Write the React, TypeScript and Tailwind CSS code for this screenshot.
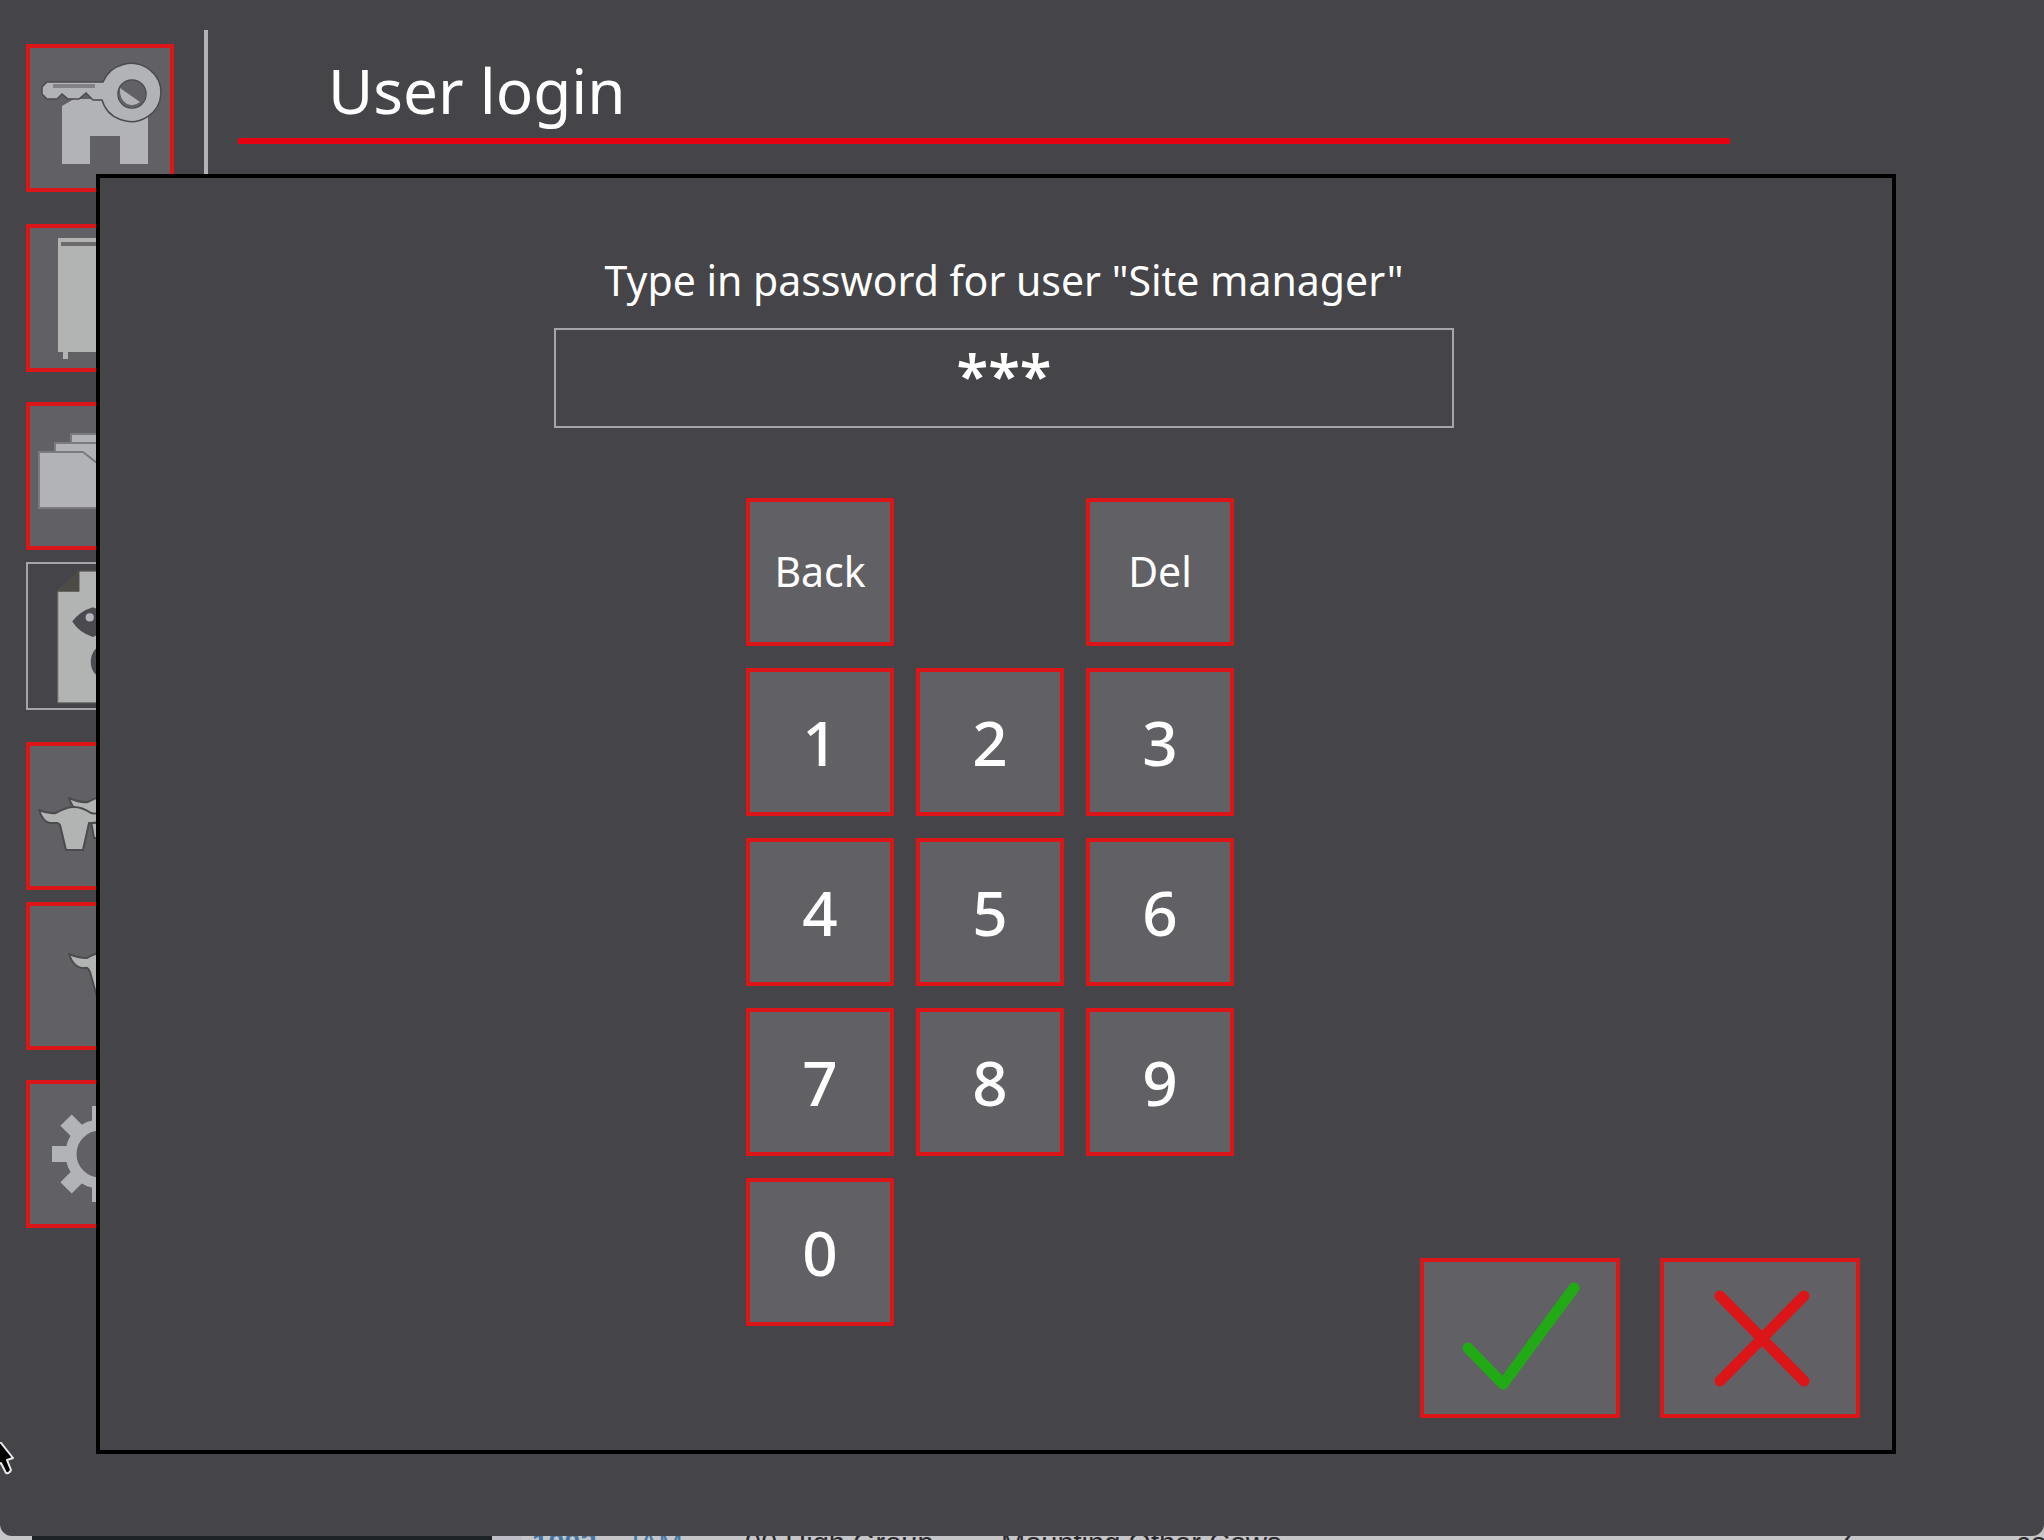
import { useState } from "react";
import type { ReactNode } from "react";

const LIGHT = "#b2b3b7";
const PAPER = "#b2b4b3";
const DARK = "#4b4a4f";

function Icon({ children }: { children: ReactNode }) {
  return (
    <svg viewBox="0 0 140 140" className="h-full w-full" aria-hidden="true">
      {children}
    </svg>
  );
}

function HomeKeyIcon() {
  return (
    <Icon>
      <path d="M32 58 L44 51 H118 V116 H90 V88 H60 V116 H32 Z" fill={LIGHT} />
      <path
        fillRule="evenodd"
        d="M17 34 H73 A30 29 0 1 1 72 52 H63 L56 45 L49 51 H38 L32 46 L27 51 H17 L12 46 V39 Z M116 46 A14 14 0 1 0 88 46 A14 14 0 1 0 116 46 Z"
        fill={LIGHT}
        stroke={DARK}
        strokeWidth="1.5"
      />
      <circle cx="102" cy="46" r="13.5" fill="#616064" />
      <path d="M90 40 L110 54 Q104 59 97 56 Q89 51 90 40 Z" fill={LIGHT} />
      <rect x="23" y="36" width="42" height="4" fill="#838286" />
    </Icon>
  );
}

function CabinetIcon() {
  return (
    <Icon>
      <path d="M28 10 H112 V124 H107 V131 H102 V124 H38 V131 H33 V124 H28 Z" fill={PAPER} />
      <rect x="31" y="14" width="78" height="4" fill="#6b6b6d" />
    </Icon>
  );
}

function FoldersIcon() {
  return (
    <Icon>
      <g fill={LIGHT} stroke="#7b7a7f" strokeWidth="2">
        <path d="M41 28 H84 L98 38 H130 V84 H41 Z" />
        <path d="M25 37 H68 L82 47 H118 V92 H25 Z" />
        <path d="M9 46 H53 L67 57 H104 V102 H9 Z" />
      </g>
    </Icon>
  );
}

function ReportIcon() {
  return (
    <Icon>
      <path d="M50 7 H112 V135 H29 V27 Z" fill={PAPER} stroke="#6c6b66" strokeWidth="1" />
      <path d="M29 27 L48 7 H50 V27 Z" fill="#4c4b45" />
      <path d="M43 56 Q50 46 63 42 Q76 46 84 56 Q76 67 63 71 Q50 67 43 56 Z" fill={DARK} />
      <circle cx="60" cy="52" r="4" fill="#b5b5c0" />
      <ellipse cx="76" cy="95" rx="15" ry="17" fill={DARK} />
    </Icon>
  );
}

function HerdIcon() {
  return (
    <Icon>
      <g fill={PAPER} stroke={DARK} strokeWidth="2" strokeLinejoin="round">
        <path d="M39 52 Q50 57 58 56 Q70 48 82 54 Q94 58 104 51 Q100 65 85 66 L80 92 H64 L60 70 Q44 68 39 52 Z" />
        <path d="M9 64 Q18 68 26 67 Q36 61 44 61 Q52 61 61 67 Q70 69 79 64 Q76 78 59 77 L53 104 H36 L30 79 Q29 77 27 77 H20 Q13 76 9 64 Z" />
      </g>
    </Icon>
  );
}

function CowIcon() {
  return (
    <Icon>
      <path
        d="M39 48 Q48 52 57 52 Q67 46 75 46 Q83 46 92 52 Q101 52 110 48 Q106 61 97 62 Q90 61 89 66 L83 91 H67 L60 66 Q58 61 55 62 Q44 63 39 48 Z"
        fill={PAPER}
        stroke={DARK}
        strokeWidth="2"
        strokeLinejoin="round"
      />
    </Icon>
  );
}

function GearIcon() {
  return (
    <Icon>
      <g fill={LIGHT}>
        {[0, 45, 90, 135].map((angle) => (
          <path
            key={angle}
            d="M62 22 H78 V45 H62 Z M62 95 H78 V118 H62 Z"
            transform={`rotate(${angle} 70 70)`}
          />
        ))}
      </g>
      <circle cx="70" cy="70" r="29" fill="none" stroke={LIGHT} strokeWidth="11" />
    </Icon>
  );
}

const menu = [
  { label: "Home and login", icon: <HomeKeyIcon />, look: "border-4 border-[#dc1519] bg-[#616064]" },
  { label: "Cabinet", icon: <CabinetIcon />, look: "mt-8 border-4 border-[#dc1519] bg-[#616064]" },
  { label: "Folders", icon: <FoldersIcon />, look: "mt-[30px] border-4 border-[#dc1519] bg-[#616064]" },
  { label: "Reports", icon: <ReportIcon />, look: "mt-3 border-2 border-[#a6a6a8]" },
  { label: "Herd", icon: <HerdIcon />, look: "mt-8 border-4 border-[#dc1519] bg-[#616064]" },
  { label: "Animal", icon: <CowIcon />, look: "mt-3 border-4 border-[#dc1519] bg-[#616064]" },
  { label: "Settings", icon: <GearIcon />, look: "mt-[30px] border-4 border-[#dc1519] bg-[#616064]" },
];

const keys = ["Back", "", "Del", "1", "2", "3", "4", "5", "6", "7", "8", "9", "0"];

function Keypad({ onKey }: { onKey: (key: string) => void }) {
  return (
    <div className="grid grid-cols-3 gap-[22px]">
      {keys.map((key, i) =>
        key === "" ? (
          <span key={i} />
        ) : (
          <button
            key={key}
            type="button"
            onClick={() => onKey(key)}
            className={
              "flex size-[148px] items-center justify-center border-4 border-[#dc1519] bg-[#616064] " +
              (key.length > 1 ? "text-[41px]" : "text-[62px] font-medium")
            }
          >
            {key}
          </button>
        ),
      )}
    </div>
  );
}

function PasswordDialog() {
  const [code, setCode] = useState("123");

  const press = (key: string) => {
    if (key === "Back") setCode(code.slice(0, -1));
    else if (key === "Del") setCode("");
    else setCode(code + key);
  };

  return (
    <section
      role="dialog"
      aria-label="Password"
      className="absolute top-[174px] right-[148px] left-24 border-4 border-black bg-[#454448] pt-[72px] pb-8"
    >
      <div className="flex flex-col items-center pl-4">
        <label htmlFor="password" className="text-[41px] leading-[60px]">
          Type in password for user "Site manager"
        </label>
        <input
          id="password"
          readOnly
          value={"*".repeat(code.length)}
          className="mt-[18px] h-[100px] w-[900px] max-w-full border-2 border-[#a6a6a8] pb-2 text-center text-[58px] font-semibold outline-none"
        />
      </div>
      <div className="mt-[70px] grid pr-8">
        <div className="col-start-1 row-start-1 flex justify-center pb-[92px] pl-5">
          <Keypad onKey={press} />
        </div>
        <div className="col-start-1 row-start-1 flex gap-10 self-end justify-self-end">
          <button type="button" aria-label="Confirm" className="h-40 w-[200px] border-4 border-[#dc1519] bg-[#616064]">
            <svg viewBox="0 0 192 152" fill="none" stroke="#22aa16" strokeWidth="11" strokeLinecap="round" strokeLinejoin="round">
              <path d="M44 86 L79 122 L150 26" />
            </svg>
          </button>
          <button type="button" aria-label="Cancel" className="h-40 w-[200px] border-4 border-[#dc1519] bg-[#616064]">
            <svg viewBox="0 0 192 152" fill="none" stroke="#dc1519" strokeWidth="11" strokeLinecap="round">
              <path d="M56 34 L140 119 M140 34 L56 119" />
            </svg>
          </button>
        </div>
      </div>
    </section>
  );
}

export default function App() {
  return (
    <div className="flex h-screen min-h-[1540px] flex-col overflow-hidden bg-[#c6c5c7] font-['Noto_Sans',sans-serif] text-white">
      <main className="relative flex flex-1 rounded-b-xl bg-[#454448]">
        <nav aria-label="Main menu" className="flex flex-col pt-11 pl-[26px]">
          {menu.map((item) => (
            <button key={item.label} type="button" aria-label={item.label} className={"size-[148px] " + item.look}>
              {item.icon}
            </button>
          ))}
        </nav>
        <div className="mt-[30px] mb-[90px] ml-[30px] w-1 bg-[#b2b3b7]" />
        <header className="mt-[46px] mr-[314px] ml-[30px] flex-1">
          <h1 className="border-b-6 border-[#e3000f] pb-1 pl-[90px] text-[62px] leading-[88px]">User login</h1>
        </header>
        <PasswordDialog />
        <svg
          viewBox="0 0 16 34"
          className="absolute top-[1442px] left-0 h-[34px] w-4"
          fill="black"
          stroke="#e8e8e8"
          strokeWidth="2"
          strokeLinejoin="round"
          aria-hidden="true"
        >
          <path d="M-14 -18 L13 16 L7 18 L11 28 Q9 32 6 31 L1 21 L-14 30 Z" />
        </svg>
      </main>
      <footer className="flex h-1 overflow-hidden pl-8 font-['Liberation_Sans',sans-serif] text-[29px] leading-[14px] text-[#2a2a2c]">
        <div className="w-[460px] bg-[#1c2226]" />
        <div className="w-[30px] bg-[#bfbdc6]" />
        <div className="w-[223px] pl-[10px] text-[#3f76a3]">
          <b>1003</b> <span className="pl-5">JAM</span>
        </div>
        <div className="w-64">99 High Group</div>
        <div className="flex-1">Mounting Other Cows</div>
        <div className="w-[184px]">✓</div>
        <div className="w-7 whitespace-nowrap">co</div>
      </footer>
    </div>
  );
}
